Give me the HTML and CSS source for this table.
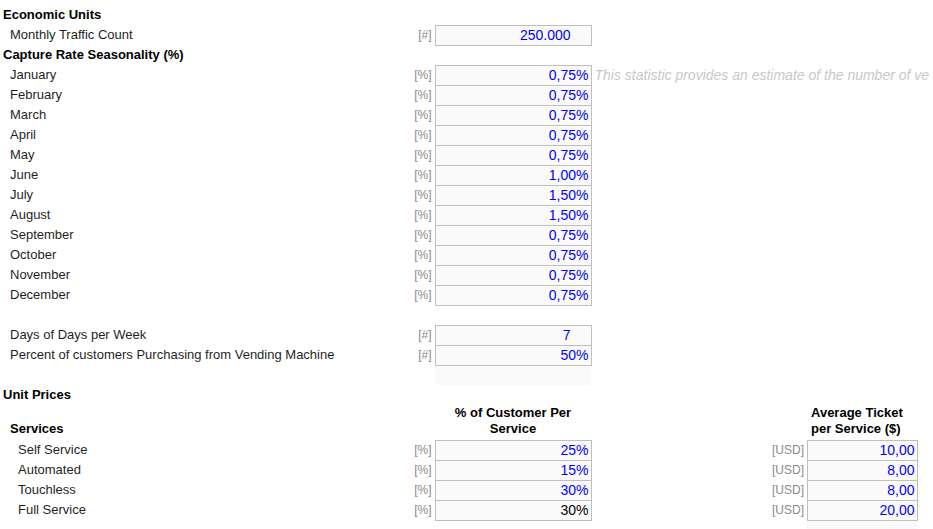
FILE: index.html
```html
<!DOCTYPE html>
<html lang="en">
<head>
    <meta charset="UTF-8">
    <title>Economic Units</title>
    <link rel="stylesheet" href="styles.css">
</head>
<body>

    <table class="sheet">
        <colgroup>
            <col class="c-label">
            <col class="c-unit">
            <col class="c-val">
            <col class="c-note">
            <col class="c-unit2">
            <col class="c-val2">
            <col class="c-rest">
        </colgroup>
        <tr><td class="head">Economic Units</td><td></td><td></td><td></td><td></td><td></td><td></td></tr>
        <tr><td class="sub">Monthly Traffic Count</td><td class="unit">[#]</td><td class="inp pad">250.000</td><td></td><td></td><td></td><td></td></tr>
        <tr><td class="head">Capture Rate Seasonality (%)</td><td></td><td></td><td></td><td></td><td></td><td></td></tr>
        <tr><td class="sub">January</td><td class="unit">[%]</td><td class="inp">0,75%</td><td class="note">This statistic provides an estimate of the number of ve</td><td></td><td></td><td></td></tr>
        <tr><td class="sub">February</td><td class="unit">[%]</td><td class="inp">0,75%</td><td></td><td></td><td></td><td></td></tr>
        <tr><td class="sub">March</td><td class="unit">[%]</td><td class="inp">0,75%</td><td></td><td></td><td></td><td></td></tr>
        <tr><td class="sub">April</td><td class="unit">[%]</td><td class="inp">0,75%</td><td></td><td></td><td></td><td></td></tr>
        <tr><td class="sub">May</td><td class="unit">[%]</td><td class="inp">0,75%</td><td></td><td></td><td></td><td></td></tr>
        <tr><td class="sub">June</td><td class="unit">[%]</td><td class="inp">1,00%</td><td></td><td></td><td></td><td></td></tr>
        <tr><td class="sub">July</td><td class="unit">[%]</td><td class="inp">1,50%</td><td></td><td></td><td></td><td></td></tr>
        <tr><td class="sub">August</td><td class="unit">[%]</td><td class="inp">1,50%</td><td></td><td></td><td></td><td></td></tr>
        <tr><td class="sub">September</td><td class="unit">[%]</td><td class="inp">0,75%</td><td></td><td></td><td></td><td></td></tr>
        <tr><td class="sub">October</td><td class="unit">[%]</td><td class="inp">0,75%</td><td></td><td></td><td></td><td></td></tr>
        <tr><td class="sub">November</td><td class="unit">[%]</td><td class="inp">0,75%</td><td></td><td></td><td></td><td></td></tr>
        <tr><td class="sub">December</td><td class="unit">[%]</td><td class="inp">0,75%</td><td></td><td></td><td></td><td></td></tr>
        <tr><td></td><td></td><td></td><td></td><td></td><td></td><td></td></tr>
        <tr><td class="sub">Days of Days per Week</td><td class="unit">[#]</td><td class="inp pad">7</td><td></td><td></td><td></td><td></td></tr>
        <tr><td class="sub">Percent of customers Purchasing from Vending Machine</td><td class="unit">[#]</td><td class="inp">50%</td><td></td><td></td><td></td><td></td></tr>
        <tr><td></td><td></td><td class="fill"></td><td></td><td></td><td></td><td></td></tr>
        <tr><td class="head">Unit Prices</td><td></td><td></td><td></td><td></td><td></td><td></td></tr>
        <tr class="tall">
            <td class="sub bold">Services</td><td></td>
            <td class="colhead center">% of Customer Per<br>Service</td><td></td><td></td>
            <td class="colhead">Average Ticket<br>per Service ($)</td><td></td>
        </tr>
        <tr><td class="item">Self Service</td><td class="unit">[%]</td><td class="inp">25%</td><td></td><td class="unit">[USD]</td><td class="inp">10,00</td><td></td></tr>
        <tr><td class="item">Automated</td><td class="unit">[%]</td><td class="inp">15%</td><td></td><td class="unit">[USD]</td><td class="inp">8,00</td><td></td></tr>
        <tr><td class="item">Touchless</td><td class="unit">[%]</td><td class="inp">30%</td><td></td><td class="unit">[USD]</td><td class="inp">8,00</td><td></td></tr>
        <tr><td class="item">Full Service</td><td class="unit">[%]</td><td class="inp calc">30%</td><td></td><td class="unit">[USD]</td><td class="inp">20,00</td><td></td></tr>
        <tr><td></td><td></td><td></td><td></td><td></td><td class="fill"></td><td></td></tr>
    </table>

</body>
</html>
```

FILE: styles.css
```css
body {
    margin: 0;
    padding-top: 5px;
    background-color: white;
    color: #1f1f1f;
    font-family: "Liberation Sans", Arial, sans-serif;
    font-size: 13px;
    overflow: hidden;
}

.sheet {
    border-collapse: collapse;
    table-layout: fixed;
    width: 960px;
}

.c-label { width: 411px; }
.c-unit { width: 24px; }
.c-val { width: 156px; }
.c-note { width: 181px; }
.c-unit2 { width: 35px; }
.c-val2 { width: 110px; }
.c-rest { width: 43px; }

.sheet tr {
    height: 20px;
}

.sheet td {
    padding: 0;
    line-height: 18px;
    white-space: nowrap;
    overflow: visible;
    vertical-align: middle;
}

.head {
    padding-left: 3px !important;
    font-weight: bold;
    color: black;
}

.sub {
    padding-left: 10px !important;
}

.item {
    padding-left: 18px !important;
}

.bold {
    font-weight: bold;
    color: black;
}

.unit {
    text-align: right;
    padding-right: 3px !important;
    color: #8a8a8a;
    font-size: 12px;
}

.inp {
    border: 1px solid #bfbfbf;
    background-color: #fafafa;
    color: #0000ff;
    text-align: right;
    padding-right: 2px !important;
    font-size: 14px;
}

.inp.pad {
    padding-right: 20px !important;
}

.inp.calc {
    color: black;
}

.fill {
    background-color: #fafafa;
}

.note {
    padding-left: 3px !important;
    color: #c8c8c8;
    font-style: italic;
    font-size: 14px;
}

.sheet .tall {
    height: 35px;
}

.tall td {
    line-height: 16px;
    vertical-align: top;
    padding-top: 0;
}

.tall td.sub {
    vertical-align: bottom;
    padding-bottom: 3px !important;
}

.colhead {
    font-weight: bold;
    color: black;
    padding-left: 4px !important;
}

.center {
    text-align: center;
    padding-left: 0 !important;
}
```
